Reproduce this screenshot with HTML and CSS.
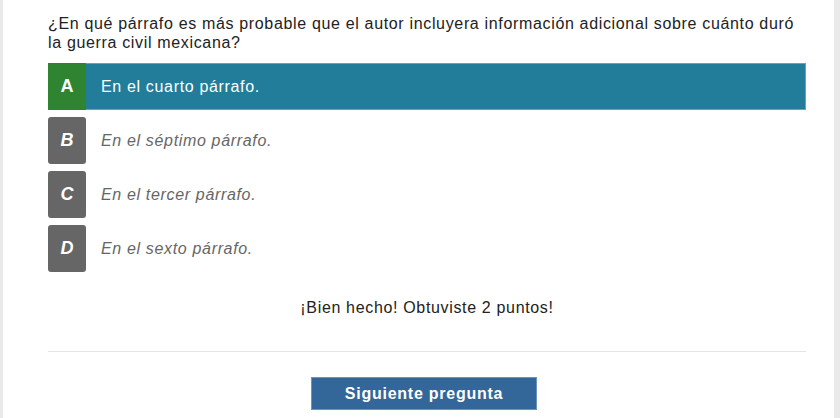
FILE: index.html
```html
<!DOCTYPE html>
<html lang="es">
<head>
<meta charset="utf-8">
<link rel="stylesheet" href="styles.css">
</head>
<body>
<div class="panel">
  <p class="question">¿En qué párrafo es más probable que el autor incluyera información adicional sobre cuánto duró la guerra civil mexicana?</p>
  <ul class="options">
    <li class="option selected"><span class="letter">A</span><span class="text">En el cuarto párrafo.</span></li>
    <li class="option"><span class="letter">B</span><span class="text">En el séptimo párrafo.</span></li>
    <li class="option"><span class="letter">C</span><span class="text">En el tercer párrafo.</span></li>
    <li class="option"><span class="letter">D</span><span class="text">En el sexto párrafo.</span></li>
  </ul>
  <p class="feedback">¡Bien hecho! Obtuviste 2 puntos!</p>
  <hr class="divider">
  <div class="actions"><button class="next">Siguiente pregunta</button></div>
</div>
</body>
</html>
```
FILE: styles.css
```css
html, body {
  margin: 0;
  height: 100%;
}
body {
  background: #e9e9e9;
  font-family: Arial, "Liberation Sans", sans-serif;
  font-size: 16px;
  letter-spacing: 0.66px;
  color: #222;
  padding: 0 6px 0 3px;
  box-sizing: border-box;
  overflow: hidden;
}
.panel {
  background: #fff;
  height: 100%;
  padding: 14px 28px 0 45px;
  box-sizing: border-box;
}
.question {
  margin: 0;
  line-height: 19px;
  color: #222;
}
.options {
  list-style: none;
  margin: 11px 0 0;
  padding: 0;
  display: flex;
  flex-direction: column;
  gap: 7px;
}
.option {
  display: flex;
  align-items: center;
  height: 47px;
}
.letter {
  width: 38px;
  height: 47px;
  flex: none;
  display: flex;
  align-items: center;
  justify-content: center;
  background: #666;
  color: #fff;
  font-weight: bold;
  font-style: italic;
  font-size: 18px;
  letter-spacing: 0;
  border-radius: 3px;
}
.text {
  margin-left: 15px;
  font-style: italic;
  color: #666;
}
.option.selected {
  background: #217d99;
  box-shadow: inset 0 0 0 1px #5fa8bf;
}
.option.selected .letter {
  background: #2f8432;
  font-style: normal;
  border-radius: 0;
}
.option.selected .text {
  font-style: normal;
  color: #fff;
}
.feedback {
  margin: 26px 0 0;
  text-align: center;
  line-height: 19px;
}
.divider {
  border: 0;
  border-top: 1px solid #e5e5e5;
  margin: 34px 0 0;
}
.actions {
  display: flex;
  justify-content: center;
  margin-top: 25px;
  padding-right: 6px;
}
.next {
  width: 226px;
  height: 33px;
  background: #336699;
  border: 1px solid #6f93b8;
  color: #fff;
  font-family: Arial, "Liberation Sans", sans-serif;
  font-size: 16px;
  letter-spacing: 0.75px;
  font-weight: bold;
  padding: 0;
}
```
